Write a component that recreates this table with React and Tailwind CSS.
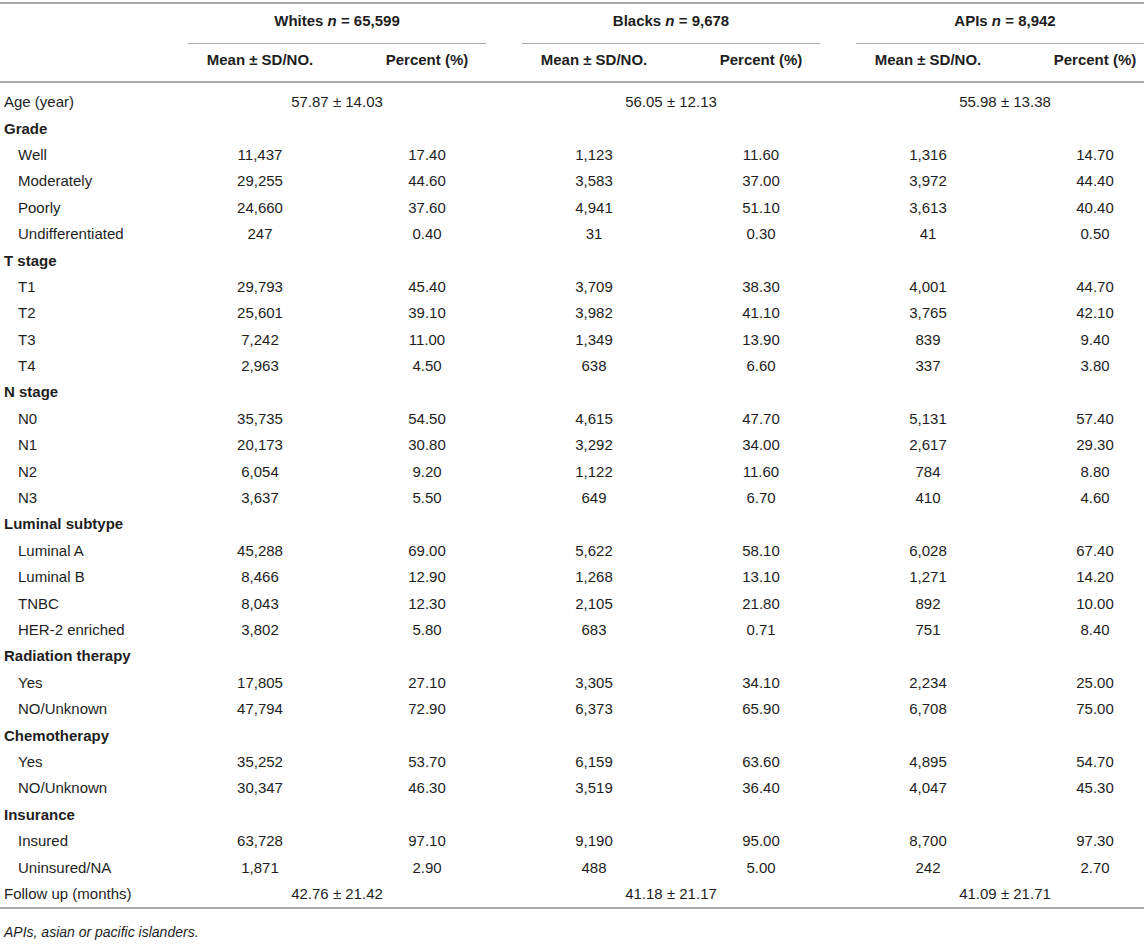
const groups = [
  { name: 'Whites', n: '65,599' },
  { name: 'Blacks', n: '9,678' },
  { name: 'APIs', n: '8,942' },
];

// kind: 'span' = one value per group, 'head' = bold section title, 'sub' = indented count row
const rows = [
  { kind: 'span', label: 'Age (year)', values: ['57.87 ± 14.03', '56.05 ± 12.13', '55.98 ± 13.38'] },
  { kind: 'head', label: 'Grade' },
  { kind: 'sub', label: 'Well', values: ['11,437', '17.40', '1,123', '11.60', '1,316', '14.70'] },
  { kind: 'sub', label: 'Moderately', values: ['29,255', '44.60', '3,583', '37.00', '3,972', '44.40'] },
  { kind: 'sub', label: 'Poorly', values: ['24,660', '37.60', '4,941', '51.10', '3,613', '40.40'] },
  { kind: 'sub', label: 'Undifferentiated', values: ['247', '0.40', '31', '0.30', '41', '0.50'] },
  { kind: 'head', label: 'T stage' },
  { kind: 'sub', label: 'T1', values: ['29,793', '45.40', '3,709', '38.30', '4,001', '44.70'] },
  { kind: 'sub', label: 'T2', values: ['25,601', '39.10', '3,982', '41.10', '3,765', '42.10'] },
  { kind: 'sub', label: 'T3', values: ['7,242', '11.00', '1,349', '13.90', '839', '9.40'] },
  { kind: 'sub', label: 'T4', values: ['2,963', '4.50', '638', '6.60', '337', '3.80'] },
  { kind: 'head', label: 'N stage' },
  { kind: 'sub', label: 'N0', values: ['35,735', '54.50', '4,615', '47.70', '5,131', '57.40'] },
  { kind: 'sub', label: 'N1', values: ['20,173', '30.80', '3,292', '34.00', '2,617', '29.30'] },
  { kind: 'sub', label: 'N2', values: ['6,054', '9.20', '1,122', '11.60', '784', '8.80'] },
  { kind: 'sub', label: 'N3', values: ['3,637', '5.50', '649', '6.70', '410', '4.60'] },
  { kind: 'head', label: 'Luminal subtype' },
  { kind: 'sub', label: 'Luminal A', values: ['45,288', '69.00', '5,622', '58.10', '6,028', '67.40'] },
  { kind: 'sub', label: 'Luminal B', values: ['8,466', '12.90', '1,268', '13.10', '1,271', '14.20'] },
  { kind: 'sub', label: 'TNBC', values: ['8,043', '12.30', '2,105', '21.80', '892', '10.00'] },
  { kind: 'sub', label: 'HER-2 enriched', values: ['3,802', '5.80', '683', '0.71', '751', '8.40'] },
  { kind: 'head', label: 'Radiation therapy' },
  { kind: 'sub', label: 'Yes', values: ['17,805', '27.10', '3,305', '34.10', '2,234', '25.00'] },
  { kind: 'sub', label: 'NO/Unknown', values: ['47,794', '72.90', '6,373', '65.90', '6,708', '75.00'] },
  { kind: 'head', label: 'Chemotherapy' },
  { kind: 'sub', label: 'Yes', values: ['35,252', '53.70', '6,159', '63.60', '4,895', '54.70'] },
  { kind: 'sub', label: 'NO/Unknown', values: ['30,347', '46.30', '3,519', '36.40', '4,047', '45.30'] },
  { kind: 'head', label: 'Insurance' },
  { kind: 'sub', label: 'Insured', values: ['63,728', '97.10', '9,190', '95.00', '8,700', '97.30'] },
  { kind: 'sub', label: 'Uninsured/NA', values: ['1,871', '2.90', '488', '5.00', '242', '2.70'] },
  { kind: 'span', label: 'Follow up (months)', values: ['42.76 ± 21.42', '41.18 ± 21.17', '41.09 ± 21.71'] },
];

const cols = 'grid grid-cols-[170px_180px_154px_180px_154px_180px_154px] w-[1172px]';

const Row = ({ row }) => {
  if (row.kind === 'head') {
    return (
      <div className={`${cols} h-[26.4px] items-center`}>
        <div className="pl-1 font-bold whitespace-nowrap">{row.label}</div>
      </div>
    );
  }
  if (row.kind === 'span') {
    return (
      <div className={`${cols} h-[26.4px] items-center`}>
        <div className="pl-1 whitespace-nowrap">{row.label}</div>
        {row.values.map((v, i) => (
          <div key={i} className="col-span-2 text-center">{v}</div>
        ))}
      </div>
    );
  }
  return (
    <div className={`${cols} h-[26.4px] items-center`}>
      <div className="pl-[18px] whitespace-nowrap">{row.label}</div>
      {row.values.map((v, i) => (
        <div key={i} className="text-center">{v}</div>
      ))}
    </div>
  );
};

export default function App() {
  return (
    <div className="w-[1144px] h-[944px] overflow-hidden bg-white text-[15px] leading-[20px] text-[#1e1e1e] font-['Liberation_Sans',Arial,sans-serif]">
      <div className="pt-[2px]">
        <div className="h-[2px] bg-[#a9a9a9]" />

        <div className={`${cols} h-[40px]`}>
          <div />
          {groups.map((g) => (
            <div key={g.name} className="col-span-2 flex flex-col">
              <div className="flex-1 pt-[7px] text-center font-bold">
                {g.name} <span className="italic">n</span> = {g.n}
              </div>
              <div className="mx-[18px] h-px bg-[#a9a9a9]" />
            </div>
          ))}
        </div>

        <div className={`${cols} h-[37px] pt-[6px] font-bold`}>
          <div />
          {groups.map((g) => (
            <div key={g.name} className="contents">
              <div className="text-center">Mean ± SD/NO.</div>
              <div className="text-center">Percent (%)</div>
            </div>
          ))}
        </div>
        <div className="h-[2px] bg-[#a9a9a9]" />

        <div className="pt-[6px]">
          {rows.map((r, i) => (
            <Row key={i} row={r} />
          ))}
        </div>

        <div className="h-[2px] bg-[#a9a9a9]" />
        <div className="mt-[13px] pl-1 text-[14px] italic">APIs, asian or pacific islanders.</div>
      </div>
    </div>
  );
}
